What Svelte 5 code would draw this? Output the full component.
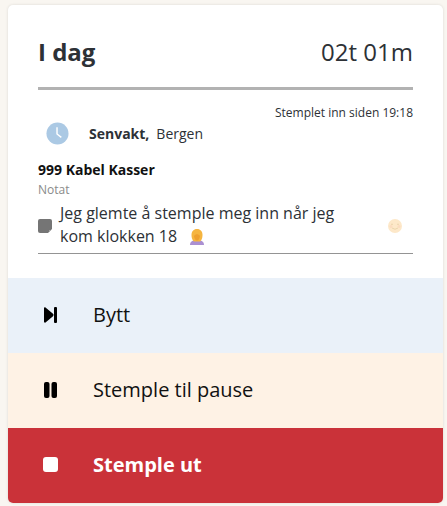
<script lang="ts">
	const actions = [
		{ label: 'Bytt', kind: 'swap' },
		{ label: 'Stemple til pause', kind: 'pause' },
		{ label: 'Stemple ut', kind: 'stop' }
	];
</script>

<div class="page">
	<section class="card">
		<div class="body">
			<header class="head">
				<h1>I dag</h1>
				<span class="total">02t 01m</span>
			</header>

			<p class="since">Stemplet inn siden 19:18</p>

			<div class="shift">
				<svg class="clock" viewBox="0 0 24 24" width="23" height="23" aria-hidden="true">
					<circle cx="12" cy="12" r="11.5" fill="#abc9e4" />
					<path d="M11.5 5.5v7l4.5 3.5" fill="none" stroke="#fff" stroke-width="1.5" />
				</svg>
				<span class="shift-name">Senvakt,</span>
				<span class="place">Bergen</span>
			</div>

			<div class="cost">999 Kabel Kasser</div>
			<div class="note-label">Notat</div>

			<div class="note">
				<svg class="note-icon" viewBox="0 0 14 14" width="14" height="14" aria-hidden="true">
					<rect width="14" height="14" rx="2" fill="#757575" />
					<path d="M14 10v4h-4z" fill="#fff" />
					<path d="M13 11l-2 2v-2z" fill="#a5a5a5" />
				</svg>
				<p class="note-text">
					Jeg glemte å stemple meg inn når jeg kom klokken 18
					<svg class="emoji" viewBox="0 0 14 16" width="14" height="16" aria-hidden="true">
						<path d="M0 16c0-3.500 2.500-5 7-5s7 1.500 7 5z" fill="#ab90d2" />
						<path d="M7 0c3.500 0 5.500 2.500 5.500 6 0 3-1 5.500-2.500 6.500H4C2.500 11.500 1.500 9 1.500 6 1.500 2.500 3.500 0 7 0z" fill="#f5b540" />
						<path d="M4 7c1.500-2.500 4.500-2.500 6 0-.3 2.500-1.500 4.500-3 4.500S4.300 9.500 4 7z" fill="#eea02e" />
					</svg>
				</p>
				<svg class="smiley" viewBox="0 0 14 14" width="14" height="14" aria-hidden="true">
					<circle cx="7" cy="7" r="7" fill="#fde8c9" />
					<circle cx="3" cy="7.500" r="1.500" fill="#fbdcc0" />
					<circle cx="11" cy="7.500" r="1.500" fill="#fbdcc0" />
					<path d="M3 5.500q1-1 2 0M9 5.500q1-1 2 0M4 9q3 2.500 6 0" fill="none" stroke="#e6cfa4" stroke-width=".8" />
				</svg>
			</div>
		</div>

		<div class="actions">
			{#each actions as action (action.kind)}
				<button class="action {action.kind}">
					<span class="action-icon">
						{#if action.kind === 'swap'}
							<svg viewBox="0 0 13 16" width="13" height="16" aria-hidden="true">
								<path d="M0 1.500C0 .500.800 0 1.500.600L9 6.800c.7.600.7 1.800 0 2.400l-7.500 6.200C.8 16 0 15.500 0 14.500z" fill="#000" />
								<rect x="10" y="0" width="3" height="16" rx="1" fill="#000" />
							</svg>
						{:else if action.kind === 'pause'}
							<svg viewBox="0 0 13 16" width="13" height="16" aria-hidden="true">
								<rect x="0" y="0" width="5.500" height="16" rx="2" fill="#000" />
								<rect x="7.500" y="0" width="5.500" height="16" rx="2" fill="#000" />
							</svg>
						{:else}
							<svg viewBox="0 0 15 15" width="15" height="15" aria-hidden="true">
								<rect width="15" height="15" rx="3" fill="#fff" />
							</svg>
						{/if}
					</span>
					<span>{action.label}</span>
				</button>
			{/each}
		</div>
	</section>
</div>

<style>
	:global(body) {
		margin: 0;
		background: #f9f6f1;
		font-family: 'Open Sans', sans-serif;
		color: #2d3136;
	}

	.page {
		padding: 5px 4px 3px 8px;
	}

	.card {
		background: #fff;
		border-radius: 5px;
		overflow: hidden;
		box-shadow: 0 0 3px rgba(0, 0, 0, 0.12);
	}

	.body {
		padding: 0 30px 24px;
	}

	.head {
		display: flex;
		justify-content: space-between;
		align-items: center;
		height: 85px;
		padding-top: 11px;
		box-sizing: border-box;
		border-bottom: 3px solid #b2b2b2;
	}

	h1 {
		margin: 0;
		font-size: 24px;
		font-weight: 700;
	}

	.total {
		font-size: 24px;
	}

	.since {
		margin: 15px 0 0;
		font-size: 12px;
		line-height: 16px;
		text-align: right;
	}

	.shift {
		display: flex;
		align-items: center;
		height: 24px;
		padding-left: 8px;
		font-size: 14px;
	}

	.clock {
		margin-right: 20px;
	}

	.shift-name {
		font-weight: 700;
		margin-right: 7px;
	}

	.cost {
		margin-top: 15px;
		font-size: 14px;
		line-height: 19px;
		font-weight: 700;
		color: #111;
	}

	.note-label {
		font-size: 12px;
		line-height: 15px;
		margin-top: 3px;
		color: #8a8a8a;
	}

	.note {
		display: flex;
		align-items: center;
		margin-top: 5px;
		padding-bottom: 5px;
		border-bottom: 1px solid #949494;
	}

	.note-icon {
		flex: none;
		margin: 2px 8px 0 0;
	}

	.note-text {
		flex: 1;
		margin: 0;
		max-width: 290px;
		font-size: 16px;
		line-height: 23px;
	}

	.emoji {
		vertical-align: -3px;
		margin-left: 9px;
	}

	.smiley {
		margin: 2px 11px 0 auto;
	}

	.actions {
		display: flex;
		flex-direction: column;
	}

	.action {
		display: flex;
		align-items: center;
		box-sizing: border-box;
		height: 75px;
		flex: none;
		padding: 0 0 2px;
		border: none;
		font-family: inherit;
		font-size: 20px;
		color: #111;
		text-align: left;
	}

	.action-icon {
		display: flex;
		justify-content: center;
		width: 85px;
		flex: none;
	}

	.swap {
		background: #eaf1f9;
	}

	.pause {
		background: #fef2e5;
	}

	.stop {
		background: #ca3239;
		color: #fff;
		font-weight: 700;
	}
</style>
